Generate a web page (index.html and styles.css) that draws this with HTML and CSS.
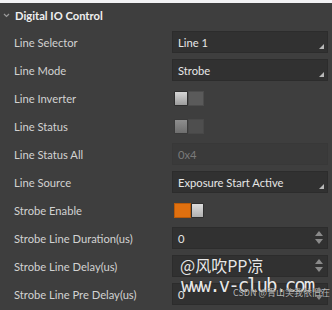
FILE: index.html
```html
<!DOCTYPE html>
<html>
<head>
<meta charset="utf-8">
<link rel="stylesheet" href="styles.css">
</head>
<body>
<div class="topstrip"></div>
<div class="panel">
  <div class="header">
    <svg class="chev" width="7" height="5" viewBox="0 0 7 5"><path d="M1 1 L3.5 3.5 L6 1" fill="none" stroke="#9a9a9a" stroke-width="1.2"/></svg>
    <span>Digital IO Control</span>
  </div>
  <div class="grid">
    <div class="label">Line Selector</div>
    <div class="cell"><div class="box combo">Line 1<span class="corner"></span></div></div>

    <div class="label">Line Mode</div>
    <div class="cell"><div class="box combo">Strobe<span class="corner"></span></div></div>

    <div class="label">Line Inverter</div>
    <div class="cell"><div class="toggle off"><span class="knob"></span><span class="track"></span></div></div>

    <div class="label">Line Status</div>
    <div class="cell"><div class="toggle disabled"><span class="knob"></span><span class="track"></span></div></div>

    <div class="label">Line Status All</div>
    <div class="cell"><div class="box readonly">0x4</div></div>

    <div class="label">Line Source</div>
    <div class="cell"><div class="box combo">Exposure Start Active<span class="corner"></span></div></div>

    <div class="label">Strobe Enable</div>
    <div class="cell"><div class="toggle on"><span class="track"></span><span class="knob"></span></div></div>

    <div class="label">Strobe Line Duration(us)</div>
    <div class="cell"><div class="box spin">0<span class="arrows"><span class="up"></span><span class="down"></span></span></div></div>

    <div class="label">Strobe Line Delay(us)</div>
    <div class="cell"><div class="box spin"><span class="hidden">0</span><span class="arrows"><span class="up"></span><span class="down"></span></span></div></div>

    <div class="label">Strobe Line Pre Delay(us)</div>
    <div class="cell"><div class="box spin">0<span class="arrows"><span class="up"></span><span class="down"></span></span></div></div>
  </div>
  <div class="wm wm1">@风吹PP凉</div>
  <div class="wm wm2">www.v-club.com</div>
  <div class="wm wm3">CSDN @青山笑我依旧在</div>
</div>
</body>
</html>
```
FILE: styles.css
```css
html, body {
  margin: 0;
  padding: 0;
  background: #3e3e3e;
  width: 332px;
  height: 310px;
  overflow: hidden;
  font-family: Lato, "Noto Sans", sans-serif;
  font-size: 11px;
}
.topstrip {
  height: 3px;
  background: #f2f2f4;
}
.panel {
  position: relative;
  background: #3e3e3e;
}
.header {
  height: 25px;
  display: flex;
  align-items: center;
  color: #f0f0f0;
  font-weight: bold;
  font-size: 11.2px;
  padding-left: 3px;
  gap: 5px;
}
.chev { display: block; }
.grid {
  display: grid;
  grid-template-columns: 172px 156px;
  grid-auto-rows: 28px;
  padding-right: 4px;
}
.label {
  display: flex;
  align-items: center;
  padding-left: 14px;
  color: #d2d2d2;
  font-size: 11.2px;
}
.cell {
  display: flex;
  align-items: center;
}
.box {
  position: relative;
  box-sizing: border-box;
  width: 156px;
  height: 22px;
  background: #313131;
  border: 1px solid #2c2c2c;
  color: #e6e6e6;
  display: flex;
  align-items: center;
  padding-left: 5px;
  font-size: 11.2px;
}
.hidden { visibility: hidden; }
.box.readonly {
  background: #3a3a3a;
  border-color: #383838;
  color: #7a7a7a;
}
.corner {
  position: absolute;
  right: 3px;
  bottom: 3px;
  width: 0;
  height: 0;
  border-left: 5px solid transparent;
  border-bottom: 5px solid #b8b8b8;
}
.arrows {
  position: absolute;
  right: 4px;
  top: 3px;
  display: flex;
  flex-direction: column;
  gap: 3px;
}
.arrows .up {
  width: 0; height: 0;
  border-left: 4px solid transparent;
  border-right: 4px solid transparent;
  border-bottom: 5px solid #8a8a8a;
}
.arrows .down {
  width: 0; height: 0;
  border-left: 4px solid transparent;
  border-right: 4px solid transparent;
  border-top: 5px solid #8a8a8a;
}
.toggle {
  display: flex;
  margin-left: 2px;
  height: 15px;
}
.toggle .knob {
  box-sizing: border-box;
  width: 14px;
  height: 15px;
  border: 1px solid #2e2e2e;
  background: linear-gradient(#d6d6d6, #9c9c9c);
  border-radius: 1px;
}
.toggle .track {
  box-sizing: border-box;
  width: 16px;
  height: 15px;
  background: #5a5a5a;
  border: 1px solid #4c4c4c;
}
.toggle.disabled .knob {
  background: linear-gradient(#8e8e8e, #6e6e6e);
  border-color: #3a3a3a;
}
.toggle.disabled .track {
  background: #4e4e4e;
  border-color: #484848;
}
.toggle.on .track {
  width: 17px;
  background: #e0700f;
  border-color: #b85a0a;
}
.toggle.on .knob {
  width: 13px;
  background: linear-gradient(#dcdcdc, #b0b0b0);
}
.wm {
  position: absolute;
  color: #e8e8e8;
  white-space: nowrap;
  text-shadow: 0 0 1px #222;
  pointer-events: none;
}
.wm1 {
  left: 180px;
  top: 250px;
  font-family: "Noto Sans CJK SC", sans-serif;
  font-size: 16px;
}
.wm2 {
  left: 181px;
  top: 271px;
  font-family: "DejaVu Sans Mono", monospace;
  font-size: 19px;
  letter-spacing: -2px;
}
.wm3 {
  left: 233px;
  top: 283px;
  font-family: "Noto Sans CJK SC", sans-serif;
  font-size: 9px;
  color: #b8b8b8;
}
```
